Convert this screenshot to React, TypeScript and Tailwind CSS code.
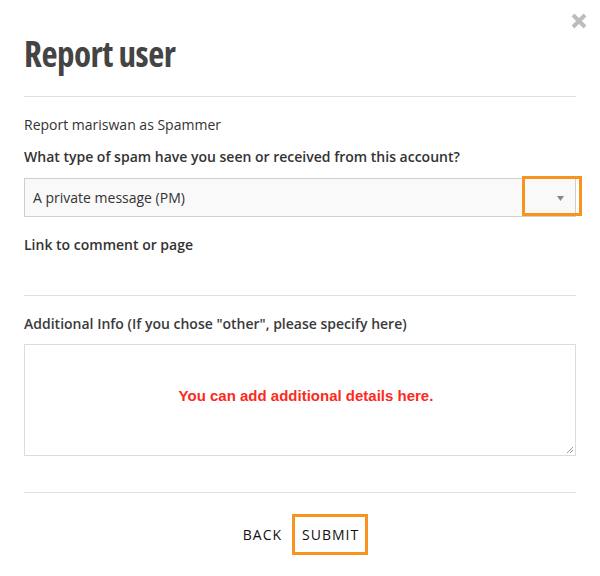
import React from "react";

export default function App() {
  return (
    <div className="w-[600px] h-[576px] bg-white relative text-[#333]" style={{ fontFamily: '"Open Sans", sans-serif' }}>
      <div className="absolute left-[571px] top-[13px]">
        <svg width="16" height="16" viewBox="0 0 16 16">
          <path d="M2 2 L14 14 M14 2 L2 14" stroke="#bdbdbd" strokeWidth="4" strokeLinecap="butt" />
        </svg>
      </div>
      <div className="px-6 pt-[30px]">
        <h1 className="text-[35px] leading-[48px] font-bold text-[#444] tracking-[-0.5px] [font-stretch:75%]" style={{ fontFamily: '"Open Sans", sans-serif' }}>
          Report user
        </h1>
        <div className="mt-[18px] h-px bg-[#e0e0e0]" />
        <p className="mt-[18px] text-[14px] leading-[20px]">Report mariswan as Spammer</p>
        <p className="mt-[12px] text-[14px] leading-[20px] font-semibold">What type of spam have you seen or received from this account?</p>
        <div className="relative mt-[11px] h-[39px] border border-[#cfcfcf] bg-[#f9f9f9] flex items-center pl-2">
          <span className="text-[14px]">A private message (PM)</span>
          <div className="absolute right-[-7px] top-[-3px] w-[60px] h-[40px] border-[3px] border-[#f7931e]" />
          <svg className="absolute right-[11px] top-[17px]" width="7" height="5" viewBox="0 0 7 5">
            <path d="M0 0 L7 0 L3.5 5 Z" fill="#888" />
          </svg>
        </div>
        <p className="mt-[18px] text-[14px] leading-[20px] font-semibold">Link to comment or page</p>
        <div className="mt-[40px] h-px bg-[#e0e0e0]" />
        <p className="mt-[18px] text-[14px] leading-[20px] font-semibold text-[#3a3a3a]">Additional Info (If you chose "other", please specify here)</p>
        <div className="relative mt-[10px] h-[112px] border border-[#dcdcdc] flex items-center justify-center">
          <span className="text-[15px] font-bold text-[#fb2a1c] ml-[12px] mt-[-8px]" style={{ fontFamily: '"Liberation Sans", Arial, sans-serif' }}>
            You can add additional details here.
          </span>
          <svg className="absolute right-[1px] bottom-[1px]" width="8" height="8" viewBox="0 0 8 8">
            <path d="M1 7 L7 1 M4 7 L7 4" stroke="#999" strokeWidth="1" />
          </svg>
        </div>
        <div className="mt-[36px] h-px bg-[#e0e0e0]" />
        <div className="mt-[21px] flex justify-center items-center gap-[10px] ml-[11px]">
          <span className="text-[14px] tracking-[1px] text-[#111]">BACK</span>
          <span className="text-[14px] tracking-[1px] text-[#111] border-[3px] border-[#f7931e] pl-[7px] pr-[6px] h-[41px] flex items-center">SUBMIT</span>
        </div>
      </div>
    </div>
  );
}
